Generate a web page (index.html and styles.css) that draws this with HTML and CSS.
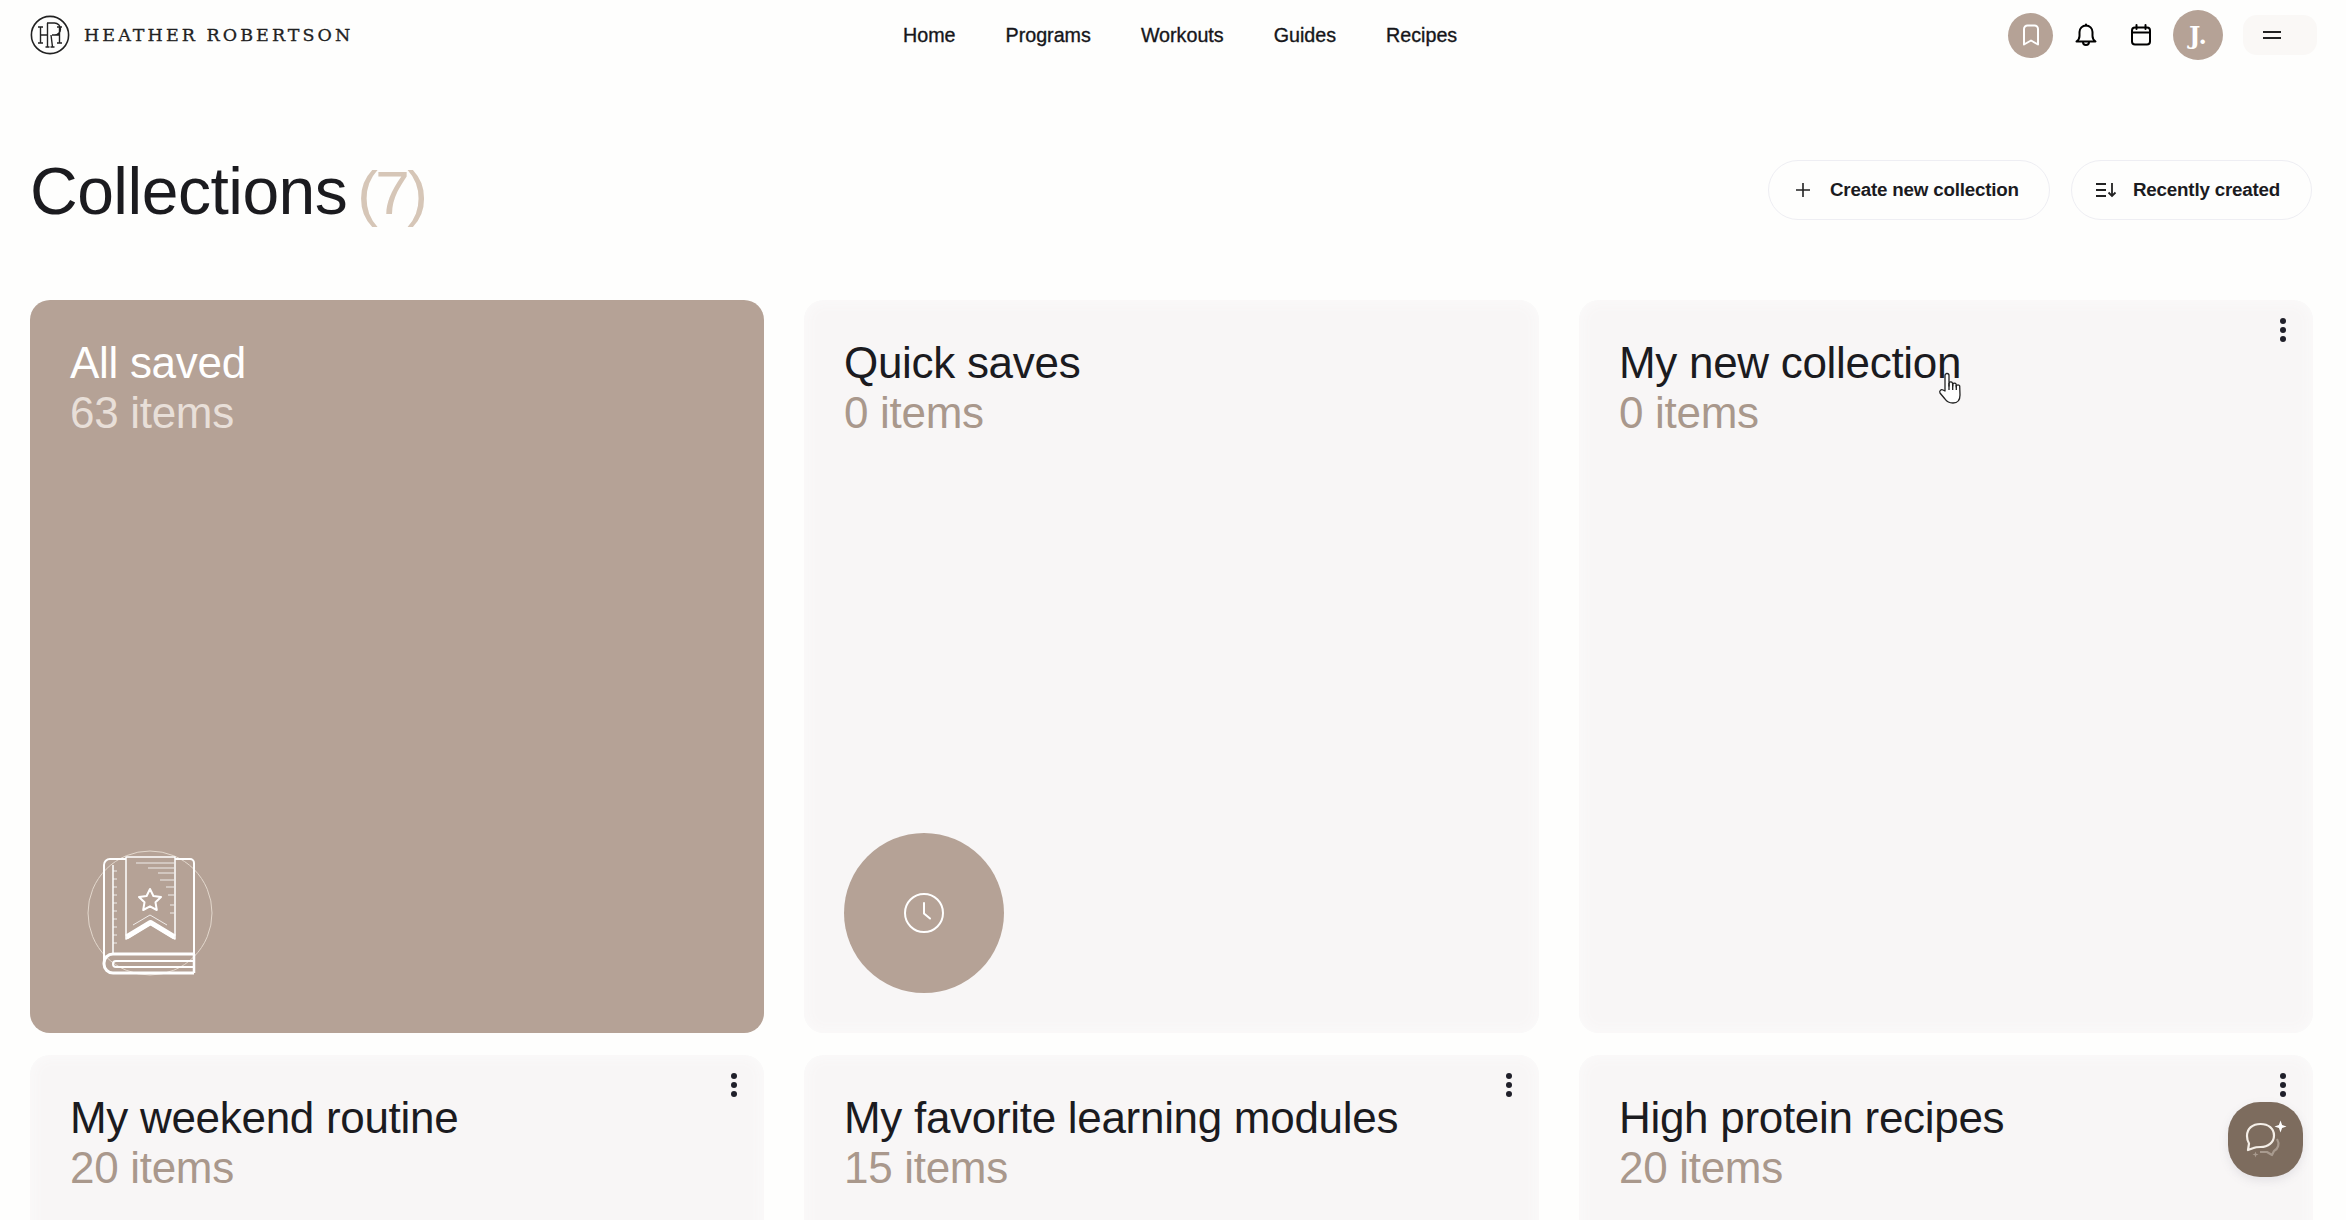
FILE: index.html
```html
<!DOCTYPE html>
<html lang="en">
	<head>
		<meta charset="UTF-8" />
		<meta name="viewport" content="width=device-width, initial-scale=1.0" />
		<title>Collections</title>
		<link rel="stylesheet" href="styles.css">
	</head>
	<body>
		<header class="topBar">
			<a class="brand">
				<svg class="brandMark" viewBox="0 0 40 40" fill="none" stroke="#222" stroke-width="1.4">
					<circle cx="20" cy="20" r="18.6" stroke-width="1.6"/>
					<path d="M8 12h5M8 28h5M10.500 12v16M10.500 20h7M17 8h6M17.500 8v24M15.500 32h4M22 8h2.500a5 5 0 0 1 0 12h-2.500M21 20l1.500 12M20.500 32h4M22.500 20h7M29.500 12v16M27 12h5M27 28h5"/>
				</svg>
				<span class="brandName">HEATHER ROBERTSON</span>
			</a>
			<nav class="mainNav">
				<a>Home</a>
				<a>Programs</a>
				<a>Workouts</a>
				<a>Guides</a>
				<a>Recipes</a>
			</nav>
			<div class="topActions">
				<button class="iconCircle savedBtn">
					<svg width="24" height="28" viewBox="0 0 24 28" fill="none" stroke="#fff" stroke-width="2" stroke-linejoin="round">
						<path d="M5 23.500V8a3.500 3.500 0 0 1 3.500-3.500h7A3.500 3.500 0 0 1 19 8v15.500l-7-4z"/>
					</svg>
				</button>
				<button class="plainIcon bellBtn">
					<svg width="22" height="24" viewBox="0 0 22 24" fill="none" stroke="#000" stroke-width="2" stroke-linejoin="round" stroke-linecap="round">
						<path d="M1.500 18.500c2-1.500 3-3 3-5.500V9a6.500 6.500 0 0 1 13 0v4c0 2.500 1 4 3 5.500z"/>
						<path d="M8 19a3 3 0 0 0 6 0M11 1.500v1"/>
					</svg>
				</button>
				<button class="plainIcon calendarBtn">
					<svg width="20" height="22" viewBox="0 0 20 22" fill="none" stroke="#000" stroke-width="2" stroke-linecap="round">
						<rect x="1" y="3.500" width="18" height="17" rx="3"/>
						<path d="M1 8.500h18M5.500 1v4M14.500 1v4"/>
					</svg>
				</button>
				<div class="avatar">J.</div>
				<button class="menuBtn">
					<span></span>
					<span></span>
				</button>
			</div>
		</header>

		<main class="page">
			<div class="pageHead">
				<h1>Collections <span>(7)</span></h1>
				<div class="pageButtons">
					<button class="pillBtn createBtn">
						<svg width="16" height="16" viewBox="0 0 16 16" stroke="#222" stroke-width="1.6"><path d="M8 1v14M1 8h14"/></svg>
						Create new collection
					</button>
					<button class="pillBtn sortBtn">
						<svg width="22" height="16" viewBox="0 0 22 16" fill="none" stroke="#222" stroke-width="1.8"><path d="M1 2h10M1 8h10M1 14h10M17 1v13M13.500 10.500l3.500 3.500 3.500-3.500"/></svg>
						Recently created
					</button>
				</div>
			</div>

			<div class="cardGrid">
				<article class="card cardActive">
					<h2>All saved</h2>
					<p>63 items</p>
					<svg class="cardArt" width="160" height="160" viewBox="0 0 160 160" fill="none" stroke="#fff" stroke-linejoin="round">
						<circle cx="80" cy="80" r="62" stroke="#e3d8cd" stroke-width="1"/>
						<path d="M56 26H40a6 6 0 0 0-6 6v100M105 26h15a4 4 0 0 1 4 4v91" stroke-width="2"/>
						<path d="M56 24h49v82l-24.500-15L56 106z" fill="#b5a296" stroke-width="1.500"/>
						<path d="M56.500 104l24-14.500 24 14.500" stroke-width="5"/>
						<path d="M66 30h38M78 35h26M88 40h16M90 47h14M96 54h8M98 62h6M100 72h4M100 80h4M63 92l17-10 17 10" stroke-width="1" opacity=".8"/>
						<path d="M80 56l3.400 7 7.600 1-5.500 5.300 1.300 7.700-6.800-3.700-6.800 3.700 1.300-7.700-5.500-5.300 7.600-1z" stroke-width="2"/>
						<path d="M43 32v89" stroke-width="1.500"/>
						<path d="M43 38h4M43 46h4M43 54h4M43 62h4M43 70h4M43 78h4M43 86h4M43 94h4M43 102h4M43 110h4" stroke-width="1" opacity=".8"/>
						<path d="M124 121H43a9 9 0 0 0-9 9v1a9 9 0 0 0 9 9h81" stroke-width="3"/>
						<path d="M124 128H46a2.500 2.500 0 0 0 0 6h78" stroke-width="2"/>
						<path d="M124 121v19" stroke-width="2.500"/>
					</svg>
				</article>

				<article class="card">
					<h2>Quick saves</h2>
					<p>0 items</p>
					<div class="cardArt clockBadge">
						<svg width="40" height="40" viewBox="0 0 40 40" fill="none" stroke="#fff" stroke-width="2" stroke-linecap="round">
							<circle cx="20" cy="20" r="19"/>
							<path d="M20 10v10.500l6 5"/>
						</svg>
					</div>
				</article>

				<article class="card">
					<button class="kebab"><i></i><i></i><i></i></button>
					<h2>My new collection</h2>
					<p>0 items</p>
				</article>

				<article class="card">
					<button class="kebab"><i></i><i></i><i></i></button>
					<h2>My weekend routine</h2>
					<p>20 items</p>
				</article>

				<article class="card">
					<button class="kebab"><i></i><i></i><i></i></button>
					<h2>My favorite learning modules</h2>
					<p>15 items</p>
				</article>

				<article class="card">
					<button class="kebab"><i></i><i></i><i></i></button>
					<h2>High protein recipes</h2>
					<p>20 items</p>
				</article>
			</div>
		</main>

		<button class="chatFab">
			<svg width="50" height="50" viewBox="0 0 50 50" fill="none" stroke="#fff" stroke-linejoin="round">
				<path d="M6 21c0-7.500 5.500-12 13.500-12S33 13.500 33 20.500 27 32 19.500 32c-2.500 0-5 0-7 1l-5.500 2 1-6.500C6.500 26 6 24 6 21z" stroke="#f5efe8" stroke-width="2.200"/>
				<path d="M36 24c3 5 1 10-3 12l-2 4-5-3h-7" stroke="#a89a8e" stroke-width="2.200"/>
				<path d="M39.500 5.500l1.600 4.400 4.400 1.600-4.400 1.600-1.600 4.400-1.600-4.400-4.400-1.600 4.400-1.600z" fill="#fff" stroke="none"/>
				<path d="M14.500 36.500l.8 2.200 2.200.8-2.200.8-.8 2.200-.8-2.200-2.200-.8 2.200-.8z" fill="#a89a8e" stroke="none"/>
			</svg>
		</button>

		<svg class="handCursor" width="26" height="34" viewBox="0 0 26 34" fill="#fff" stroke="#222" stroke-width="1.300" stroke-linejoin="round">
			<path d="M7 19V3.500a2 2 0 0 1 4 0V14l0-3a2 2 0 0 1 3.500 0l.2 3v-2a2 2 0 0 1 3.400 0l.2 3v-1a1.800 1.800 0 0 1 3.400 0l.3 9c0 5-2 8-7 8-4 0-6-1-8-4l-5-6c-1-2 1-4 3-3z"/>
			<path d="M11 11v7M14.700 12v6M18.300 13v5" fill="none"/>
		</svg>
	</body>
</html>
```

FILE: styles.css
```css
* {
	box-sizing: border-box;
}

html,
body {
	height: 1220px;
	overflow: hidden;
}

body {
	margin: 0;
	background: #fefefd;
	color: #1b1b1f;
	font-family: "Liberation Sans", Arial, sans-serif;
}

button {
	border: none;
	background: none;
	padding: 0;
	font: inherit;
	color: inherit;
	cursor: pointer;
}

.topBar {
	display: flex;
	align-items: center;
	height: 70px;
	padding: 0 29px 0 30px;
}

.brand {
	display: flex;
	align-items: center;
	gap: 14px;
	width: 873px;
}

.brandMark {
	width: 40px;
	height: 40px;
}

.brandName {
	font-family: "DejaVu Serif", "Liberation Serif", serif;
	font-size: 17.500px;
	letter-spacing: 3.05px;
	color: #222;
	-webkit-text-stroke: 0.3px #222;
}

.mainNav {
	display: flex;
	gap: 50px;
	font-size: 19.700px;
	color: #16161a;
	-webkit-text-stroke: 0.35px #16161a;
}

.topActions {
	display: flex;
	align-items: center;
	margin-left: auto;
}

.iconCircle {
	display: flex;
	align-items: center;
	justify-content: center;
	width: 45px;
	height: 45px;
	border-radius: 50%;
	background: #b5a296;
}

.plainIcon {
	display: flex;
	align-items: center;
	justify-content: center;
	width: 24px;
	height: 24px;
}

.bellBtn {
	margin-left: 21px;
}

.calendarBtn {
	margin-left: 31px;
}

.avatar {
	display: flex;
	align-items: center;
	justify-content: center;
	width: 50px;
	height: 50px;
	margin-left: 20px;
	border-radius: 50%;
	background: #b5a296;
	color: #fff;
	font-family: "DejaVu Serif", serif;
	font-size: 24px;
	font-weight: 700;
}

.menuBtn {
	display: flex;
	flex-direction: column;
	align-items: center;
	justify-content: center;
	gap: 4px;
	width: 74px;
	height: 40px;
	margin-left: 20px;
	padding-right: 16px;
	border-radius: 14px;
	background: #faf8f6;
}

.menuBtn span {
	width: 18px;
	height: 2px;
	background: #222;
}

.page {
	padding: 0 34px 0 30px;
}

.pageHead {
	display: flex;
	justify-content: space-between;
	align-items: center;
	height: 120px;
	margin: 60px 0 50px;
}

.pageHead h1 {
	margin: 0;
	padding-top: 2px;
	font-size: 66px;
	font-weight: 400;
	letter-spacing: -0.5px;
	word-spacing: -8px;
}

.pageHead h1 span {
	font-size: 62px;
	letter-spacing: -2.5px;
	color: #d6c6b7;
}

.pageButtons {
	display: flex;
	gap: 21px;
}

.pillBtn {
	display: flex;
	align-items: center;
	height: 60px;
	border: 1px solid #eeeef3;
	border-radius: 30px;
	font-size: 18.800px;
	font-weight: 700;
	letter-spacing: -0.2px;
	white-space: nowrap;
}

.createBtn {
	gap: 19px;
	width: 282px;
	padding-left: 26px;
}

.sortBtn {
	gap: 16px;
	width: 241px;
	padding-left: 23px;
}

.cardGrid {
	display: grid;
	grid-template-columns: 734px 735px 734px;
	grid-template-rows: 733px 733px;
	column-gap: 40px;
	row-gap: 22px;
}

.card {
	position: relative;
	padding: 38px 40px;
	border-radius: 20px;
	background: #f8f6f6;
	box-shadow: inset 0 0 14px 2px #fbfafa;
}

.card h2 {
	margin: 0;
	font-size: 44px;
	line-height: 50px;
	font-weight: 400;
	letter-spacing: -0.3px;
}

.card p {
	margin: 0;
	font-size: 44px;
	line-height: 50px;
	letter-spacing: -0.3px;
	color: #a9988c;
}

.cardActive {
	background: #b5a296;
	box-shadow: none;
	color: #fff;
}

.cardActive p {
	color: #e8dfd8;
}

/* art sits in the bottom corner of the card */
.cardArt {
	position: absolute;
	left: 40px;
	bottom: 40px;
}

.clockBadge {
	display: flex;
	align-items: center;
	justify-content: center;
	width: 160px;
	height: 160px;
	border-radius: 50%;
	background: #b5a296;
}

.kebab {
	position: absolute;
	top: 18px;
	right: 27px;
	display: flex;
	flex-direction: column;
	align-items: center;
	gap: 3px;
	width: 6px;
}

.kebab i {
	width: 6px;
	height: 6px;
	border-radius: 50%;
	background: #20202a;
}

.chatFab {
	position: fixed;
	left: 2228px;
	top: 1102px;
	display: flex;
	align-items: center;
	justify-content: center;
	width: 75px;
	height: 75px;
	border-radius: 32px;
	background: #7d6c5e;
	box-shadow: 0 4px 10px rgba(120, 120, 140, 0.15);
}

.handCursor {
	position: fixed;
	left: 1938px;
	top: 372px;
}
```
